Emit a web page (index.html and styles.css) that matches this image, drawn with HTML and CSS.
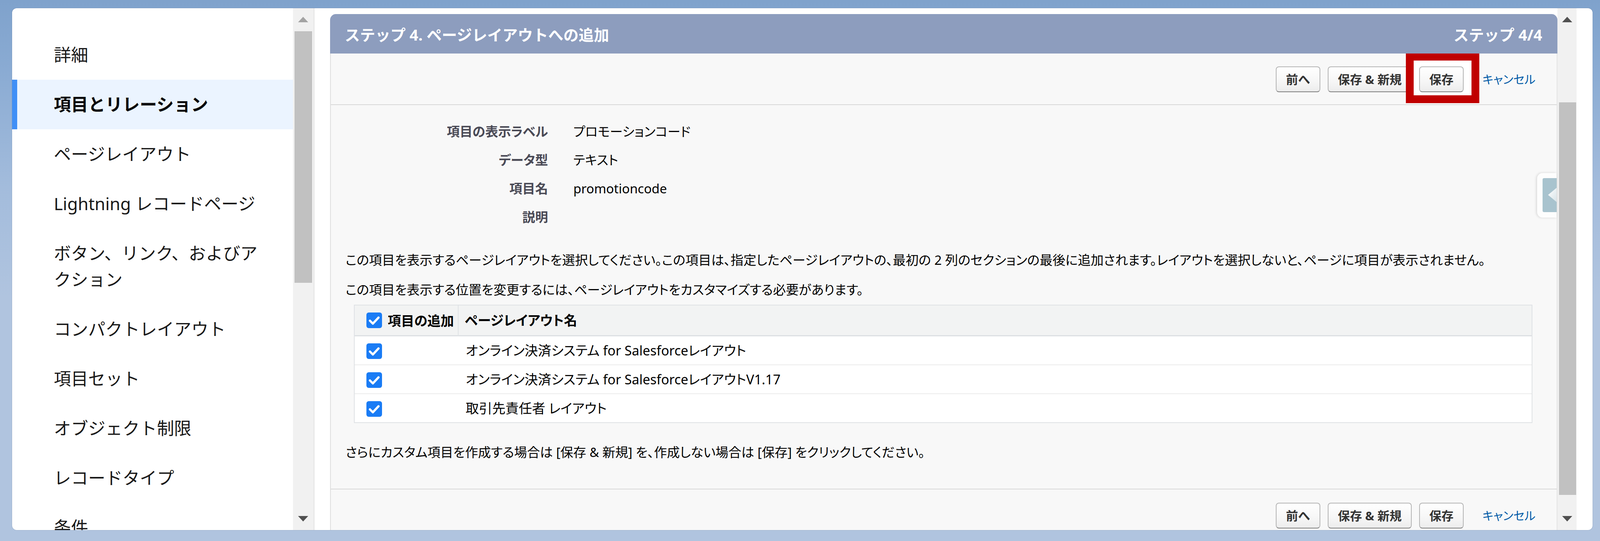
FILE: index.html
```html
<!DOCTYPE html>
<html lang="ja">
<head>
<meta charset="utf-8">
<title>ステップ 4. ページレイアウトへの追加</title>
<link rel="stylesheet" href="styles.css">
</head>
<body>
<div class="card">
  <nav class="sidebar">
    <ul class="nav">
      <li class="nav-item"><span class="nav-label">詳細</span></li>
      <li class="nav-item active"><span class="nav-label">項目とリレーション</span></li>
      <li class="nav-item"><span class="nav-label">ページレイアウト</span></li>
      <li class="nav-item"><span class="nav-label">Lightning レコードページ</span></li>
      <li class="nav-item"><span class="nav-label">ボタン、リンク、およびアクション</span></li>
      <li class="nav-item"><span class="nav-label">コンパクトレイアウト</span></li>
      <li class="nav-item"><span class="nav-label">項目セット</span></li>
      <li class="nav-item"><span class="nav-label">オブジェクト制限</span></li>
      <li class="nav-item"><span class="nav-label">レコードタイプ</span></li>
      <li class="nav-item"><span class="nav-label">条件</span></li>
    </ul>
  </nav>
  <div class="vscroll side-scroll">
    <div class="arrow-box"><span class="arrow-up dim"></span></div>
    <div class="thumb"></div>
    <div class="spacer"></div>
    <div class="arrow-box"><span class="arrow-down"></span></div>
  </div>
  <main class="main">
    <section class="panel">
      <header class="panel-header">
        <h2 class="panel-title">ステップ 4. ページレイアウトへの追加</h2>
        <span class="panel-step">ステップ 4/4</span>
      </header>
      <div class="panel-body">
        <div class="toolbar toolbar-top">
          <button class="btn">前へ</button>
          <button class="btn">保存 &amp; 新規</button>
          <span class="btn-wrap highlight"><button class="btn">保存</button></span>
          <a class="cancel">キャンセル</a>
        </div>

        <dl class="details">
          <dt>項目の表示ラベル</dt><dd>プロモーションコード</dd>
          <dt>データ型</dt><dd>テキスト</dd>
          <dt>項目名</dt><dd>promotioncode</dd>
          <dt>説明</dt><dd></dd>
        </dl>

        <div class="intro">
          <p>この項目を表示するページレイアウトを選択してください。この項目は、指定したページレイアウトの、最初の 2 列のセクションの最後に追加されます。レイアウトを選択しないと、ページに項目が表示されません。</p>
          <p>この項目を表示する位置を変更するには、ページレイアウトをカスタマイズする必要があります。</p>
        </div>

        <table class="layout-table">
          <colgroup><col class="col-add"><col></colgroup>
          <thead>
            <tr>
              <th class="cell-add"><svg class="cb" viewBox="0 0 40 40"><rect width="40" height="40" rx="6" fill="#1a7cf5"/><path d="M9 21 L16.5 28.5 L31 13" fill="none" stroke="#fff" stroke-width="5.5" stroke-linecap="round" stroke-linejoin="round"/></svg><span class="th-label">項目の追加</span></th>
              <th class="cell-name">ページレイアウト名</th>
            </tr>
          </thead>
          <tbody>
            <tr>
              <td class="cell-add"><svg class="cb" viewBox="0 0 40 40"><rect width="40" height="40" rx="6" fill="#1a7cf5"/><path d="M9 21 L16.5 28.5 L31 13" fill="none" stroke="#fff" stroke-width="5.5" stroke-linecap="round" stroke-linejoin="round"/></svg></td>
              <td class="cell-name">オンライン決済システム for Salesforceレイアウト</td>
            </tr>
            <tr>
              <td class="cell-add"><svg class="cb" viewBox="0 0 40 40"><rect width="40" height="40" rx="6" fill="#1a7cf5"/><path d="M9 21 L16.5 28.5 L31 13" fill="none" stroke="#fff" stroke-width="5.5" stroke-linecap="round" stroke-linejoin="round"/></svg></td>
              <td class="cell-name">オンライン決済システム for SalesforceレイアウトV1.17</td>
            </tr>
            <tr>
              <td class="cell-add"><svg class="cb" viewBox="0 0 40 40"><rect width="40" height="40" rx="6" fill="#1a7cf5"/><path d="M9 21 L16.5 28.5 L31 13" fill="none" stroke="#fff" stroke-width="5.5" stroke-linecap="round" stroke-linejoin="round"/></svg></td>
              <td class="cell-name">取引先責任者 レイアウト</td>
            </tr>
          </tbody>
        </table>

        <p class="note">さらにカスタム項目を作成する場合は [保存 &amp; 新規] を、作成しない場合は [保存] をクリックしてください。</p>

        <div class="toolbar toolbar-bottom">
          <button class="btn">前へ</button>
          <button class="btn">保存 &amp; 新規</button>
          <button class="btn">保存</button>
          <a class="cancel">キャンセル</a>
        </div>
      </div>
      <div class="collapse-handle">
        <span class="tab">
          <svg class="tab-arrow" viewBox="0 0 36 87">
            <defs>
              <linearGradient id="arrowGrad" x1="0" y1="0" x2="1" y2="1">
                <stop offset="0" stop-color="#ffffff"/>
                <stop offset="1" stop-color="#d6e2e7"/>
              </linearGradient>
            </defs>
            <polygon points="14,43 37,24 37,62" fill="url(#arrowGrad)"/>
          </svg>
        </span>
      </div>
    </section>
    <div class="vscroll main-scroll">
      <div class="arrow-box"><span class="arrow-up"></span></div>
      <div class="thumb"></div>
      <div class="spacer"></div>
      <div class="arrow-box"><span class="arrow-down"></span></div>
    </div>
  </main>
</div>
</body>
</html>
```
FILE: styles.css
```css
* { box-sizing: border-box; }

html {
  height: 100%;
  overflow: hidden;
}

body {
  margin: 0;
  height: 100%;
  overflow: hidden;
  padding: 21px 0.458vw 0 0.755vw;
  background: linear-gradient(180deg, #7fa2cc 0px, #8aabd3 180px, #a3bcdc 480px, #b0c4df 760px, #b0c4df 100%);
  font-family: "Noto Sans", "Noto Sans CJK JP", sans-serif;
  color: #000;
}

/* ---------- card ---------- */
.card {
  display: flex;
  width: 100%;
  height: calc(100% - 28px);
  background: #fff;
  border-radius: 12px;
  overflow: hidden;
  box-shadow: 0 0 0 1px rgba(70, 95, 130, 0.18);
}

/* ---------- sidebar ---------- */
.sidebar {
  flex: 0 0 17.56vw;
  padding-top: 56px;
  overflow: hidden;
}

.nav {
  list-style: none;
  margin: 0;
  padding: 0;
}

.nav-item {
  padding: 30px 0 30px 2.29vw;
  border-left: 13px solid transparent;
  font-size: 44px;
  line-height: 67px;
  color: #181818;
}

.nav-label {
  display: block;
  max-width: 550px;
}

.nav-item.active {
  border-left-color: #3f8ff6;
  background: #ebf4ff;
  font-weight: 700;
  color: #080707;
}

/* ---------- scrollbars ---------- */
.vscroll {
  display: flex;
  flex-direction: column;
  background: #f1f1f1;
}

.side-scroll {
  flex: 0 0 1.33vw;
  border-right: 2px solid #e3e3e3;
}

.main-scroll {
  flex: 0 0 1.19vw;
}

.arrow-box {
  height: 58px;
  flex: none;
  display: flex;
  align-items: center;
  justify-content: center;
}

.arrow-up {
  width: 0;
  height: 0;
  border-left: 13px solid transparent;
  border-right: 13px solid transparent;
  border-bottom: 14px solid #505050;
}

.arrow-up.dim { border-bottom-color: #a3a3a3; }

.arrow-down {
  width: 0;
  height: 0;
  border-left: 13px solid transparent;
  border-right: 13px solid transparent;
  border-top: 14px solid #505050;
}

.thumb {
  flex: none;
  background: #c1c1c1;
}

.side-scroll .thumb {
  height: 644px;
  margin: 1px 4px 0;
}

.main-scroll .thumb {
  height: 1005px;
  margin: 183px 1px 0 4px;
}

.spacer { flex: 1; }

/* ---------- main ---------- */
.main {
  flex: 1 1 auto;
  display: flex;
  padding-right: 1.01vw;
  min-width: 0;
}

.panel {
  flex: 1 1 auto;
  min-width: 0;
  margin: 15px 0 0 0.98vw;
  display: flex;
  flex-direction: column;
  position: relative;
}

.panel-header {
  flex: none;
  height: 101px;
  background: #8d9dbe;
  border-radius: 15px 15px 0 0;
  display: flex;
  justify-content: space-between;
  align-items: center;
  padding: 0 0.96vw 0 0.92vw;
  color: #fff;
  font-weight: 700;
  font-size: 39px;
  white-space: nowrap;
}

.panel-title {
  margin: 0;
  font-size: 39px;
  font-weight: 700;
}

.panel-body {
  flex: 1;
  background: #f8f8f8;
  border-left: 2px solid #dedede;
  border-right: 2px solid #e4e4e4;
  font-feature-settings: "palt";
  font-size: 33px;
  overflow: hidden;
}

/* ---------- toolbars ---------- */
.toolbar {
  display: flex;
  justify-content: flex-end;
  align-items: flex-start;
  gap: 0.46vw;
  padding-right: 1.33vw;
}

.toolbar-top {
  height: 132px;
  padding-top: 33px;
  border-bottom: 2px solid #d8d8d8;
}

.toolbar-bottom {
  margin-top: 55px;
  height: 109px;
  padding-top: 34px;
  border-top: 2px solid #d8d8d8;
}

.btn {
  height: 66px;
  padding: 0 24px;
  font-family: "Noto Sans", "Noto Sans CJK JP", sans-serif;
  font-size: 31px;
  font-weight: 700;
  color: #333;
  background: linear-gradient(180deg, #ffffff 0%, #f6f6f6 60%, #ececec 100%);
  border: 2px solid #b5b5b5;
  border-bottom-color: #808080;
  border-radius: 8px;
  line-height: 1;
  white-space: nowrap;
}

.btn-wrap {
  position: relative;
  display: flex;
}

.highlight::before {
  content: "";
  position: absolute;
  left: -34px;
  right: -40px;
  top: -35px;
  bottom: -28px;
  border: 20px solid #c00000;
  background: #fff;
  z-index: 1;
}

.btn-wrap .btn {
  position: relative;
  z-index: 2;
}

.cancel {
  margin-left: 0.71vw;
  font-size: 30px;
  line-height: 66px;
  color: #015ba7;
  cursor: pointer;
  white-space: nowrap;
}

/* ---------- details ---------- */
.details {
  margin: 0;
  padding-top: 31px;
  display: grid;
  grid-template-columns: 13.58vw 1fr;
  column-gap: 1.58vw;
}

.details dt {
  text-align: right;
  font-weight: 700;
  color: #4a4a56;
  line-height: 73px;
  white-space: nowrap;
}

.details dd {
  margin: 0;
  line-height: 73px;
  color: #000;
}

/* ---------- intro ---------- */
.intro {
  margin-top: 36px;
  padding: 0 0.92vw;
  font-size: 33px;
  line-height: 76px;
  white-space: nowrap;
}

.intro p { margin: 0; }

/* ---------- table ---------- */
.layout-table {
  margin: 0 1.51vw 0 1.44vw;
  width: calc(100% - 2.95vw);
  table-layout: fixed;
  border-spacing: 0;
  border: 2px solid #dfe2e5;
  background: #fff;
  font-size: 34px;
}

.col-add { width: 6.5vw; }

.layout-table th {
  background: #f2f3f3;
  text-align: left;
  font-weight: 700;
  line-height: 73px;
  border-bottom: 3px solid #dde0e3;
  padding: 0;
  white-space: nowrap;
}

.layout-table th.cell-add {
  border-right: 2px solid #e0e3e6;
  padding-left: 0.75vw;
}

.layout-table th.cell-name { padding-left: 16px; }

.layout-table td {
  line-height: 72px;
  border-bottom: 2px solid #ebebeb;
  padding: 0;
  white-space: nowrap;
}

.layout-table tbody tr:last-child td { border-bottom: 0; }

.layout-table td.cell-add { padding-left: 0.75vw; }

.layout-table td.cell-name { padding-left: 18px; }

.cb {
  width: 40px;
  height: 40px;
  vertical-align: middle;
  position: relative;
  top: -2px;
}

.th-label {
  margin-left: 14px;
  vertical-align: middle;
}

/* ---------- note ---------- */
.note {
  margin: 37px 0 0;
  padding: 0 0.92vw;
  font-size: 33px;
  line-height: 76px;
  white-space: nowrap;
}

/* ---------- collapse handle ---------- */
.collapse-handle {
  position: absolute;
  right: 2px;
  top: 407px;
  width: 50px;
  height: 114px;
  padding: 13px 0 0 14px;
  background: #fdfdfd;
  border-radius: 14px 0 0 14px;
  box-shadow: -2px 0 6px rgba(0, 0, 0, 0.14);
}

.tab {
  display: block;
  width: 36px;
  height: 87px;
  background: #a8c3ce;
  border-radius: 4px 0 0 4px;
}

.tab-arrow {
  display: block;
  width: 36px;
  height: 87px;
}
```
